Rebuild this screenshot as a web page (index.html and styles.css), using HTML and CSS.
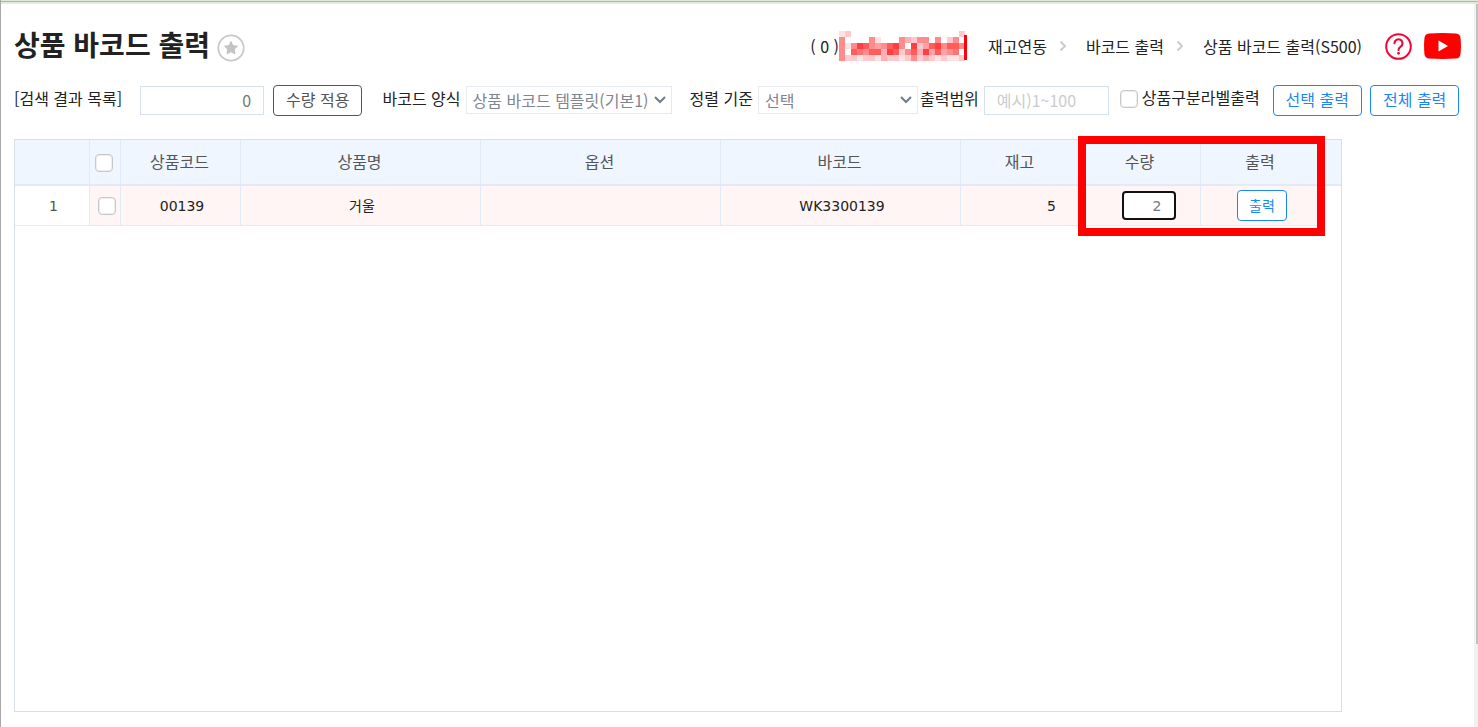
FILE: index.html
```html
<!DOCTYPE html>
<html lang="ko">
<head>
    <meta charset="UTF-8">
    <meta name="viewport" content="width=device-width, initial-scale=1.0">
    <title>상품 바코드 출력</title>
    <link rel="stylesheet" href="styles.css">
</head>
<body>
    <div class="window">
        <main class="page">
            <header class="page-header">
                <h1>상품 바코드 출력</h1>
                <button type="button" class="icon-btn" aria-label="즐겨찾기">
                    <svg width="28" height="28" viewBox="0 0 28 28">
                        <circle cx="14" cy="14" r="12.7" fill="#fff" stroke="#c8c8c8" stroke-width="1.8"/>
                        <path d="M14 7.5l1.9 4.1 4.6.6-3.3 3.1.8 4.6-4-2.2-4 2.2.8-4.6-3.3-3.1 4.6-.6z" fill="#c4c4c4" stroke="#c4c4c4" stroke-linejoin="round"/>
                    </svg>
                </button>
                <div class="account">
                    <span>( 0 )</span>
                    <svg id="masked" width="128" height="30" viewBox="0 0 128 30" shape-rendering="crispEdges" aria-hidden="true"></svg>
                </div>
                <nav class="breadcrumb">
                    <a href="#">재고연동</a>
                    <svg width="8" height="12" viewBox="0 0 8 12"><path d="M1.5 1.500l4.500 4.500-4.500 4.500" fill="none" stroke="#ccc" stroke-width="2"/></svg>
                    <a href="#">바코드 출력</a>
                    <svg width="8" height="12" viewBox="0 0 8 12"><path d="M1.5 1.500l4.500 4.500-4.500 4.500" fill="none" stroke="#ccc" stroke-width="2"/></svg>
                    <a href="#">상품 바코드 출력(S500)</a>
                </nav>
                <div class="links">
                    <a href="#" aria-label="도움말">
                        <svg width="27" height="27" viewBox="0 0 27 27" fill="none" stroke="#f50537">
                            <circle cx="13.5" cy="13.5" r="12.3" stroke-width="2"/>
                            <path d="M9.5 10.3a4 4 0 1 1 6.2 3.3c-1.4.9-2.2 1.5-2.2 3.4" stroke-width="2.1" stroke-linecap="round"/>
                            <circle cx="13.5" cy="20.3" r="1.4" fill="#f50537" stroke="none"/>
                        </svg>
                    </a>
                    <a href="#" aria-label="동영상">
                        <svg width="37" height="26" viewBox="0 0 37 26">
                            <path d="M5 .4Q18.500-.4 32 .4q4 .4 4.500 4.400.9 8 0 16.400-.5 4-4.500 4.400-13.500.8-27 0-4-.4-4.500-4.400-.9-8.400 0-16.400Q1 .8 5 .4z" fill="#f00"/>
                            <path d="M14.500 7.500v11l9.500-5.500z" fill="#fff"/>
                        </svg>
                    </a>
                </div>
            </header>

            <form class="toolbar">
                <label for="qtyAll" class="result-label">[검색 결과 목록]</label>
                <input type="text" id="qtyAll" class="text-box qty-all" value="0">
                <button type="button" class="btn btn-dark">수량 적용</button>

                <label for="template" class="template-label">바코드 양식</label>
                <select id="template" class="template">
                    <option>상품 바코드 템플릿(기본1)</option>
                </select>

                <label for="sort" class="sort-label">정렬 기준</label>
                <select id="sort" class="sort">
                    <option>선택</option>
                </select>

                <label for="range" class="range-label">출력범위</label>
                <input type="text" id="range" class="text-box range" placeholder="예시)1~100">

                <input type="checkbox" id="divider" class="check">
                <label for="divider" class="divider-label">상품구분라벨출력</label>

                <button type="button" class="btn btn-blue">선택 출력</button>
                <button type="button" class="btn btn-blue">전체 출력</button>
            </form>

            <section class="grid">
                <table>
                    <colgroup>
                        <col class="col-no">
                        <col class="col-check">
                        <col class="col-s">
                        <col class="col-l">
                        <col class="col-l">
                        <col class="col-l">
                        <col class="col-s">
                        <col class="col-s">
                        <col class="col-s">
                        <col>
                    </colgroup>
                    <thead>
                        <tr>
                            <th></th>
                            <th><input type="checkbox" class="check" aria-label="전체 선택"></th>
                            <th>상품코드</th>
                            <th>상품명</th>
                            <th>옵션</th>
                            <th>바코드</th>
                            <th>재고</th>
                            <th>수량</th>
                            <th>출력</th>
                            <th></th>
                        </tr>
                    </thead>
                    <tbody>
                        <tr>
                            <td class="no">1</td>
                            <td><input type="checkbox" class="check" aria-label="1행 선택"></td>
                            <td>00139</td>
                            <td>거울</td>
                            <td></td>
                            <td>WK3300139</td>
                            <td class="stock">5</td>
                            <td class="qty-cell"><input type="text" class="qty" value="2" aria-label="수량"></td>
                            <td><button type="button" class="btn btn-blue btn-small">출력</button></td>
                            <td class="filler"></td>
                        </tr>
                    </tbody>
                </table>
                <div class="highlight"></div>
            </section>
        </main>
        <div class="scrollbar"><div class="thumb"></div></div>
    </div>
    <script src="script.js"></script>
</body>
</html>
```
FILE: styles.css
```css
* {
    box-sizing: border-box;
}
body {
    margin: 0;
    font-family: "Noto Sans CJK KR", sans-serif;
    font-size: 16px;
    line-height: 24px;
    color: #222;
    background: #fff;
}
a {
    color: inherit;
    text-decoration: none;
}
svg {
    display: block;
}
input, select, button {
    font: inherit;
    margin: 0;
}
.window {
    display: flex;
    min-height: 100vh;
    border-left: 1px solid #aaa;
    background: linear-gradient(#dfead9 0 1px, #a9b9a3 1px 2px, #e3ebdf 2px 4px, transparent 4px);
}
.page {
    flex: 1;
    min-width: 0;
    display: flex;
    flex-direction: column;
    padding: 24px 13px 15px 13px;
}
.scrollbar {
    width: 4px;
    margin-top: 4px;
    padding-left: 2px;
    background: #f1f1f1;
}
.thumb {
    height: 88vh;
    background: #c1c1c1;
}

/* header */
.page-header {
    display: flex;
    align-items: center;
    height: 44px;
}
h1 {
    margin: 0 7px 4px 0;
    font-size: 28px;
    line-height: 40px;
    font-weight: 700;
}
.icon-btn {
    padding: 0;
    border: 0;
    background: none;
    cursor: pointer;
    margin-top: 4px;
}
.account {
    display: flex;
    align-items: center;
    margin-left: auto;
}
.breadcrumb {
    display: flex;
    align-items: center;
    gap: 12px;
    margin-left: 21px;
}
.breadcrumb svg {
    margin-right: 7px;
}
.links {
    display: flex;
    align-items: center;
    gap: 12px;
    margin-left: 23px;
}

/* toolbar */
.toolbar {
    display: flex;
    align-items: center;
    height: 40px;
    margin-top: 12px;
    white-space: nowrap;
}
.toolbar label {
    margin-right: 5px;
    padding-bottom: 4px;
}
.toolbar .result-label {
    margin-right: 18px;
}
.toolbar .template-label {
    margin-left: 20px;
}
.toolbar .sort-label {
    margin-left: 18px;
}
.toolbar .range-label {
    margin-left: 2px;
}
.toolbar .divider-label {
    margin: 0 13px 0 4px;
    padding-bottom: 6px;
}
.text-box {
    height: 29px;
    padding: 0 12px;
    border: 1px solid #d5e1ee;
    background: #fff;
    color: #777;
}
.text-box::placeholder {
    color: #ccc;
}
.qty-all {
    width: 124px;
    margin-right: 9px;
    text-align: right;
}
.range {
    width: 125px;
    margin-right: 11px;
}
select {
    height: 28px;
    padding: 0 24px 0 6px;
    border: 1px solid #e4eaf0;
    border-radius: 0;
    appearance: none;
    color: #7f858f;
    background: #fff url("data:image/svg+xml,%3Csvg xmlns='http://www.w3.org/2000/svg' width='12' height='8'%3E%3Cpath d='M1 1l5 5 5-5' fill='none' stroke='%23727c88' stroke-width='2'/%3E%3C/svg%3E") no-repeat right 5px center;
}
.template {
    width: 206px;
    padding-right: 18px;
}
.sort {
    width: 160px;
}
.btn {
    height: 31px;
    padding: 0 12px 2px;
    border: 1px solid;
    border-radius: 4px;
    background: #fff;
    line-height: 24px;
    cursor: pointer;
}
.btn-dark {
    color: #555;
}
.btn-blue {
    color: #1a87f8;
}
.btn-blue + .btn-blue {
    margin-left: 8px;
}
.check {
    appearance: none;
    display: block;
    width: 18px;
    height: 18px;
    border: 1px solid #c8c8c8;
    border-radius: 4px;
    background: #fff;
    box-shadow: inset 0 0 0 1px #eee;
}
.toolbar .check {
    margin-bottom: 3px;
}

/* grid */
.grid {
    position: relative;
    flex: 1;
    margin: 19px 119px 0 0;
    border: 1px solid #d6e0eb;
}
table {
    width: 100%;
    table-layout: fixed;
    border-collapse: separate;
    border-spacing: 0;
}
.col-no {
    width: 75px;
}
.col-check {
    width: 31px;
}
.col-s {
    width: 120px;
}
.col-l {
    width: 240px;
}
th, td {
    padding: 0;
    text-align: center;
    border-right: 1px solid #e1eaf5;
}
th {
    height: 46px;
    padding: 0 2px 2px 0;
    font-weight: 400;
    color: #555;
    background: #eff6ff;
    border-bottom: 2px solid #e1eaf5;
}
td {
    height: 40px;
    padding-left: 3px;
    font-family: "DejaVu Sans", "Noto Sans CJK KR", sans-serif;
    font-size: 14px;
    line-height: 20px;
    background: #fff5f4;
    border-bottom: 1px solid #e1eaf5;
}
th .check, td .check {
    margin: 0 auto;
}
th .check {
    margin-top: 4px;
}
th:nth-last-child(-n+2), .filler {
    border-right: 0;
}
.no {
    color: #555;
    background: #fff;
}
.filler {
    background: #fff;
    border-bottom: 0;
}
.stock {
    padding-right: 24px;
    text-align: right;
}
.qty-cell {
    padding-left: 16px;
}
.qty {
    display: block;
    width: 54px;
    height: 29px;
    margin: 0 auto;
    padding: 0 12px;
    border: 2px solid #111;
    border-radius: 4px;
    background: #fff;
    color: #777;
    text-align: right;
}
.btn-small {
    font-family: "Noto Sans CJK KR", sans-serif;
    padding: 0 11px 2px;
}
.highlight {
    position: absolute;
    top: -4px;
    left: 1063px;
    width: 247px;
    height: 100px;
    border: 8px solid #f00;
    pointer-events: none;
}
```
FILE: script.js
```js
// masked account name in 6px blocks, a higher digit is a stronger red
const rows = [
    '120000000000000000002',
    '500005100053255050250',
    '515875457850824785775',
    '507657738725738474560',
    '522122132212523212112'
];
const shades = ['#fff', '#ffe3e3', '#ffc8cd', '#ffb0b4', '#ffa0a4', '#ff8c8c', '#ff7474', '#ff5c5c', '#ff3e42'];
const svg = document.getElementById('masked');

function block(x, y, w, h, fill) {
    const rect = document.createElementNS('http://www.w3.org/2000/svg', 'rect');
    rect.setAttribute('x', x);
    rect.setAttribute('y', y);
    rect.setAttribute('width', w);
    rect.setAttribute('height', h);
    rect.setAttribute('fill', fill);
    svg.appendChild(rect);
}

rows.forEach((row, y) => {
    [...row].forEach((n, x) => block(x * 6, y * 6, 6, 6, shades[n]));
});
block(125, 4, 3, 25, '#ff0010');
```
